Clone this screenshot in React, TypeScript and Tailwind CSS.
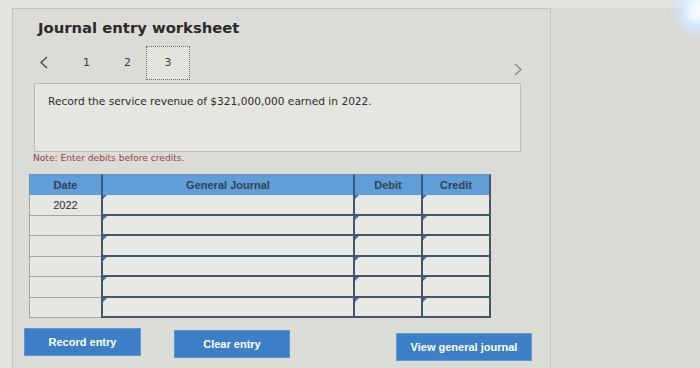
import React from "react";

const rows = ["2022", "", "", "", "", ""];

function Marker() {
  return (
    <span className="absolute left-0 top-0 h-0 w-0 border-t-[4px] border-r-[4px] border-t-[#3f6fb0] border-r-transparent" />
  );
}

function InputCell({ last }: { last?: boolean }) {
  return (
    <div
      className={`relative h-[20.5px] border-l-2 border-b-2 border-[#47556a] bg-[#e9e9e4] ${
        last ? "border-r-2" : ""
      }`}
    >
      <Marker />
    </div>
  );
}

function BlueButton({ label, className }: { label: string; className: string }) {
  return (
    <button
      className={`flex h-[26px] items-center justify-center bg-[#3c7fc6] text-[11px] font-bold text-white shadow-[0_0_0_1px_#5d97d4] ${className}`}
    >
      {label}
    </button>
  );
}

function Chevron({ dir, color }: { dir: "left" | "right"; color: string }) {
  return (
    <svg width="10" height="13" viewBox="0 0 10 13" fill="none">
      <polyline
        points={dir === "left" ? "8,1 2,6.5 8,12" : "2,1 8,6.5 2,12"}
        stroke={color}
        strokeWidth="1.4"
      />
    </svg>
  );
}

export default function App() {
  return (
    <div
      className="relative h-[368px] w-[700px] overflow-hidden bg-[#e3e3df] pl-[12px] pt-[8px]"
      style={{ fontFamily: "Verdana, 'DejaVu Sans', sans-serif" }}
    >
      <div className="flex h-full">
        <div className="flex w-[539px] flex-col border-l border-t border-r border-[#c2c2be] bg-[#dcdcd7] pl-[20px]">
          <h1 className="mt-[9px] pl-[5px] text-[14.8px] font-bold leading-[20px] text-[#2a2a2a]">
            Journal entry worksheet
          </h1>

          <div className="mt-[8px] flex h-[34px] items-center pr-[27px] text-[11px] text-[#3a3a3a]">
            <span className="ml-[6px] mt-[-1px]">
              <Chevron dir="left" color="#4a4a4a" />
            </span>
            <span className="ml-[34px]">1</span>
            <span className="ml-[34px]">2</span>
            <div className="ml-[15px] flex h-[34px] w-[44px] items-center justify-center border border-dotted border-[#6a6a6a] bg-[#e4e4df]">
              3
            </div>
            <span className="ml-auto mt-[13px]">
              <Chevron dir="right" color="#8a8a8a" />
            </span>
          </div>

          <div className="mt-[3px] ml-[1px] h-[69px] w-[487px] border border-[#bdbdb8] bg-[#e6e6e1] pl-[13px] pt-[10px] text-[10.6px] text-[#2c2c2c]">
            Record the service revenue of $321,000,000 earned in 2022.
          </div>

          <p className="mt-[0px] text-[9.1px] leading-[12px] text-[#9a3e4e]">Note: Enter debits before credits.</p>

          <div
            className="mt-[10px] ml-[-4px] grid w-[462px] grid-cols-[72px_252px_68px_70px]"
            style={{ fontFamily: "'Liberation Sans', Arial, sans-serif" }}
          >
            <div className="flex h-[21px] items-center justify-center border-l border-t border-[#6d8fb3] bg-[#5f9ed8] text-[11px] font-bold text-[#34424f]">
              Date
            </div>
            <div className="flex h-[21px] items-center justify-center border-l-2 border-t border-[#3d5a7e] border-t-[#6d8fb3] bg-[#5f9ed8] text-[11px] font-bold text-[#34424f]">
              General Journal
            </div>
            <div className="flex h-[21px] items-center justify-center border-l-2 border-t border-[#3d5a7e] border-t-[#6d8fb3] bg-[#5f9ed8] text-[11px] font-bold text-[#34424f]">
              Debit
            </div>
            <div className="flex h-[21px] items-center justify-center border-l-2 border-r-2 border-t border-[#3d5a7e] border-t-[#6d8fb3] bg-[#5f9ed8] text-[11px] font-bold text-[#34424f]">
              Credit
            </div>

            {rows.map((d, i) => (
              <React.Fragment key={i}>
                <div className="flex h-[20.5px] items-center justify-center border-l border-b border-[#a3a3a0] bg-[#e7e7e2] text-[11px] text-[#2e2e2e]">
                  {d}
                </div>
                <InputCell />
                <InputCell />
                <InputCell last />
              </React.Fragment>
            ))}
          </div>

          <div className="mt-[11px] flex items-start" style={{ fontFamily: "'Liberation Sans', Arial, sans-serif" }}>
            <BlueButton label="Record entry" className="ml-[-8px] w-[115px]" />
            <BlueButton label="Clear entry" className="ml-[35px] mt-[2px] w-[114px]" />
            <BlueButton label="View general journal" className="ml-[108px] mt-[5px] w-[134px]" />
          </div>
        </div>
        <div className="flex-1 bg-[#dadad6]" />
      </div>

      <div className="pointer-events-none absolute right-[-14px] top-[-12px] h-[44px] w-[36px] rounded-full bg-[#cfeaff] blur-[6px]" />
      <div className="pointer-events-none absolute right-[-4px] top-[-2px] h-[24px] w-[16px] rounded-full bg-[#f4fbff] blur-[3px]" />
    </div>
  );
}
